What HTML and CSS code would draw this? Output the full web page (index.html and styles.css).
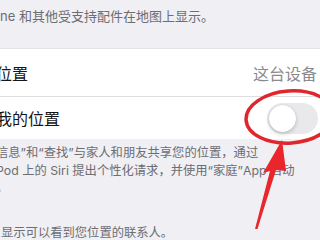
FILE: index.html
```html
<!DOCTYPE html>
<html lang="zh-CN">
<head>
    <meta charset="UTF-8">
    <meta name="viewport" content="width=device-width, initial-scale=1.0">
    <title>共享我的位置</title>
    <link rel="stylesheet" href="styles.css">
</head>
<body>

    <div class="screen">
        <!-- Note above the group -->
        <div class="note-top">ne 和其他受支持配件在地图上显示。</div>

        <!-- Settings group -->
        <div class="group">
            <div class="row row-first">
                <span class="label">位置</span>
                <span class="value">这台设备</span>
            </div>
            <div class="row row-second">
                <span class="label">我的位置</span>
                <div class="switch"><div class="knob"></div></div>
            </div>
        </div>

        <!-- Footer text -->
        <div class="footer">
            <p class="footer-text">信息”和“查找”与家人和朋友共享您的位置，通过<br>Pod 上的 Siri 提出个性化请求，并使用“家庭”App 自动<br>。</p>
            <p class="footer-last">显示可以看到您位置的联系人。</p>
        </div>

        <!-- Red annotation drawn over the screenshot -->
        <svg class="markup" width="320" height="240" viewBox="0 0 320 240">
            <ellipse cx="290" cy="117" rx="44" ry="26" transform="rotate(-4 290 117)" fill="none" stroke="#e0262c" stroke-width="3.5"/>
            <polygon points="255,229 270,171 263,173 282,140 286,171 276,170 257.5,229" fill="#e8262b"/>
        </svg>
    </div>

</body>
</html>
```

FILE: styles.css
```css
body {
    margin: 0;
    background-color: #efeff4;
    font-family: Inter, "Noto Sans CJK SC", sans-serif;
}
.screen {
    position: relative;
    width: 320px;
    height: 240px;
    overflow: hidden;
}
.note-top {
    height: 48px;
    box-sizing: border-box;
    padding-top: 7px;
    font-size: 13px;
    line-height: 18px;
    color: #6d6d72;
    white-space: nowrap;
}
.group {
    background-color: white;
    border-top: 1px solid #e3e3e6;
}
.row {
    display: flex;
    align-items: center;
    justify-content: space-between;
    padding-right: 3px;
    white-space: nowrap;
}
.row-first {
    height: 47px;
    border-bottom: 1px solid #dedee1;
}
.row-second {
    height: 42px;
    padding-right: 2px;
}
.label {
    margin-left: -4px;
    font-size: 16px;
    color: #151515;
}
.value {
    font-size: 16px;
    color: #8a8a8e;
}
.switch {
    width: 51px;
    height: 31px;
    border-radius: 16px;
    background-color: #e9e9eb;
    box-sizing: border-box;
    padding: 2px;
}
.knob {
    width: 27px;
    height: 27px;
    border-radius: 50%;
    background-color: white;
    box-shadow: 0 2px 4px rgba(0, 0, 0, 0.18), 0 0 1px rgba(0, 0, 0, 0.2);
}
.footer {
    padding-top: 5px;
    font-size: 12.3px;
    color: #6d6d72;
    white-space: nowrap;
}
.footer-text {
    margin: 0 0 0 -4px;
    line-height: 17.5px;
}
.footer-last {
    margin: 27px 0 0 1px;
    line-height: 17px;
}
.markup {
    position: absolute;
    top: 0;
    left: 0;
}
```
